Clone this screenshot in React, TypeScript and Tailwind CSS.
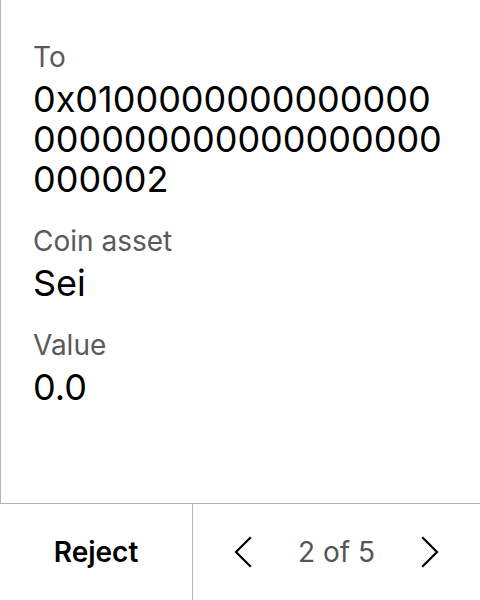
import React from 'react';

const fields = [
  { label: 'To', value: '0x01' + '0'.repeat(37) + '2' },
  { label: 'Coin asset', value: 'Sei' },
  { label: 'Value', value: '0.0' },
];

function Chevron({ dir }: { dir: 'left' | 'right' }) {
  return (
    <svg width="20" height="32" viewBox="0 0 20 32" fill="none" className="shrink-0">
      <path
        d={dir === 'left' ? 'M17 2 L3 16 L17 30' : 'M3 2 L17 16 L3 30'}
        stroke="#000"
        strokeWidth="2.2"
        strokeLinecap="square"
      />
    </svg>
  );
}

export default function App() {
  return (
    <div className="w-[480px] h-[600px] bg-white flex flex-col font-['Inter',sans-serif] text-black">
      <div className="flex-1 border-l border-[#b3b3b3] pl-[32px] pr-[33px] pt-[39px] flex flex-col gap-[24px]">
        {fields.map((f) => (
          <div key={f.label} className="flex flex-col">
            <div className="text-[28px] leading-[36px] text-[#5a5a5a]">{f.label}</div>
            <div className="mt-1 text-[36px] leading-[40px] break-all">{f.value}</div>
          </div>
        ))}
      </div>
      <div className="h-[97px] border-t border-[#b3b3b3] flex">
        <div className="w-[193px] border-r border-[#b3b3b3] flex items-center justify-center text-[28px] font-semibold">
          Reject
        </div>
        <div className="flex-1 flex items-center justify-between px-[40px]">
          <Chevron dir="left" />
          <span className="text-[28px] text-[#555]">2 of 5</span>
          <Chevron dir="right" />
        </div>
      </div>
    </div>
  );
}
